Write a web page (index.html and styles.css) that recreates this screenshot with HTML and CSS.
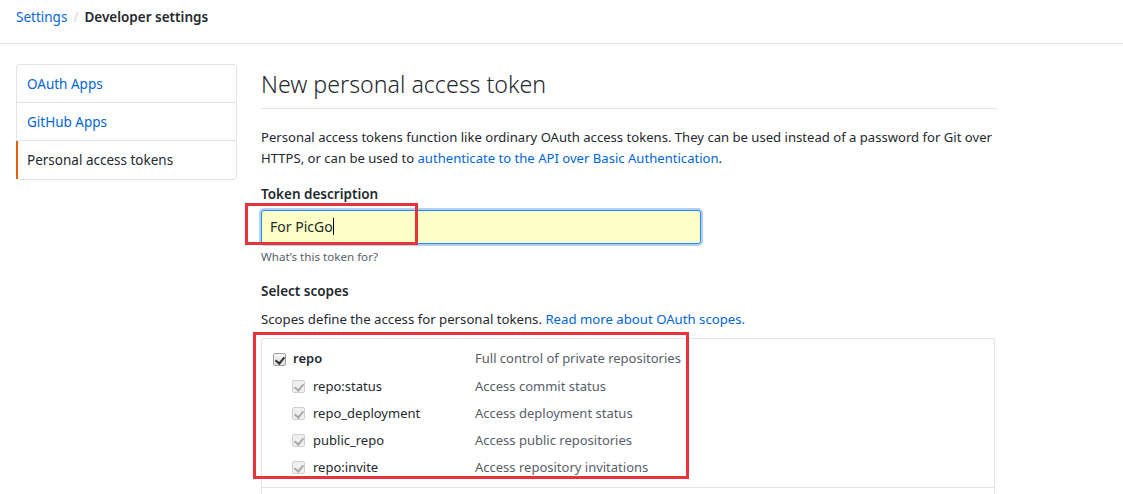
FILE: index.html
```html
<!DOCTYPE html>
<html>
<head>
<meta charset="utf-8">
<link rel="stylesheet" href="styles.css">
</head>
<body>
<header class="header">
  <nav class="crumbs"><a class="link">Settings</a><span class="sep">/</span><span class="current">Developer settings</span></nav>
</header>
<div class="layout">
  <aside class="menu">
    <a class="menu-item link">OAuth Apps</a>
    <a class="menu-item link">GitHub Apps</a>
    <a class="menu-item active">Personal access tokens</a>
  </aside>
  <main class="main">
    <h1 class="title">New personal access token</h1>
    <p class="intro">Personal access tokens function like ordinary OAuth access tokens. They can be used instead of a password for Git over HTTPS, or can be used to <a class="link">authenticate to the API over Basic Authentication</a>.</p>
    <label class="label">Token description</label>
    <div class="input-wrap">
      <div class="input">For PicGo<span class="caret"></span></div>
      <div class="mark mark-input"></div>
    </div>
    <p class="note">What’s this token for?</p>
    <div class="label scopes-title">Select scopes</div>
    <p class="scopes-desc">Scopes define the access for personal tokens. <a class="link">Read more about OAuth scopes.</a></p>
    <div class="scopes">
      <div class="group">
        <div class="row parent"><span class="cb on"></span><span class="name">repo</span><span class="desc">Full control of private repositories</span></div>
        <div class="row child"><span class="cb dis"></span><span class="name">repo:status</span><span class="desc">Access commit status</span></div>
        <div class="row child"><span class="cb dis"></span><span class="name">repo_deployment</span><span class="desc">Access deployment status</span></div>
        <div class="row child"><span class="cb dis"></span><span class="name">public_repo</span><span class="desc">Access public repositories</span></div>
        <div class="row child"><span class="cb dis"></span><span class="name">repo:invite</span><span class="desc">Access repository invitations</span></div>
      </div>
      <div class="group next"></div>
      <div class="mark mark-scopes"></div>
    </div>
  </main>
</div>
</body>
</html>
```
FILE: styles.css
```css
* { box-sizing: border-box; }
html, body { margin: 0; padding: 0; background: #fff; overflow: hidden; height: 494px; }
body { font-family: "Noto Sans", "Liberation Sans", sans-serif; font-size: 13.5px; color: #24292e; line-height: 1.5; }
.link { color: #0366d6; text-decoration: none; }
.header { height: 44px; border-bottom: 1px solid #e1e4e8; padding: 6px 16px 0; }
.crumbs { font-size: 13.5px; line-height: 22px; }
.sep { color: #d1d5da; padding: 0 6px; }
.current { font-weight: 600; color: #24292e; }
.layout { display: flex; gap: 24px; padding: 20px 16px 0; }
.menu { width: 221px; flex: none; border: 1px solid #e1e4e8; border-radius: 3px; display: flex; flex-direction: column; align-self: flex-start; }
.menu-item { display: block; height: 38px; line-height: 38px; padding: 0 10px; border-bottom: 1px solid #e1e4e8; }
.menu-item:last-child { border-bottom: 0; }
.menu-item.active { border-left: 2px solid #e36209; color: #24292e; margin-left: -1px; padding-left: 9px; }
.main { width: 736px; flex: none; }
.title { font-size: 23.2px; font-weight: 300; margin: 0; padding: 4px 0 8px; line-height: 32px; border-bottom: 1px solid #e1e4e8; }
.intro { margin: 18px 0 0; line-height: 21px; font-size: 13.1px; }
.label { display: block; font-weight: 600; margin-top: 15px; line-height: 21px; }
.input-wrap { position: relative; width: 440px; margin-top: 5px; }
.input { height: 34px; background: #ffffc8; border: 1px solid #2188ff; border-radius: 3px; box-shadow: 0 0 0 2px rgba(3,102,214,0.3); padding: 0 8px; line-height: 32px; color: #24292e; font-size: 14px; }
.caret { display: inline-block; width: 1px; height: 17px; background: #000; vertical-align: -3px; }
.mark { position: absolute; border: 3px solid #e8333a; pointer-events: none; }
.mark-input { left: -16px; top: -7px; width: 173px; height: 42px; }
.note { margin: 4px 0 0; font-size: 11.6px; color: #586069; line-height: 18px; }
.scopes-title { margin-top: 15px; }
.scopes-desc { margin: 7px 0 0; line-height: 21px; font-size: 13.2px; }
.scopes { position: relative; margin-top: 8px; border: 1px solid #e1e4e8; border-bottom: 0; border-radius: 3px 3px 0 0; width: 734px; font-size: 13px; }
.group { padding: 6px 0 6px 11px; }
.group.next { border-top: 1px solid #e1e4e8; height: 20px; padding: 0; }
.row { display: flex; align-items: center; height: 27px; }
.row.parent { height: 28px; }
.cb { width: 13px; height: 13px; border: 1px solid #a0a0a0; border-radius: 2px; background: linear-gradient(#f4f4f4, #dedede); position: relative; flex: none; }
.cb::after { content: ""; position: absolute; left: 3px; top: 1px; width: 4px; height: 7px; border: solid #333; border-width: 0 2px 2px 0; transform: rotate(40deg); }
.cb.dis { border-color: #cfcfcf; background: #f0f0f0; }
.cb.dis::after { border-color: #aaa; }
.child .cb { margin-left: 19px; }
.parent .name { font-weight: 600; margin-left: 7px; width: 182px; }
.child .name { margin-left: 8px; width: 162px; }
.desc { color: #586069; }
.mark-scopes { left: -9px; top: -7px; width: 436px; height: 147px; }
```
